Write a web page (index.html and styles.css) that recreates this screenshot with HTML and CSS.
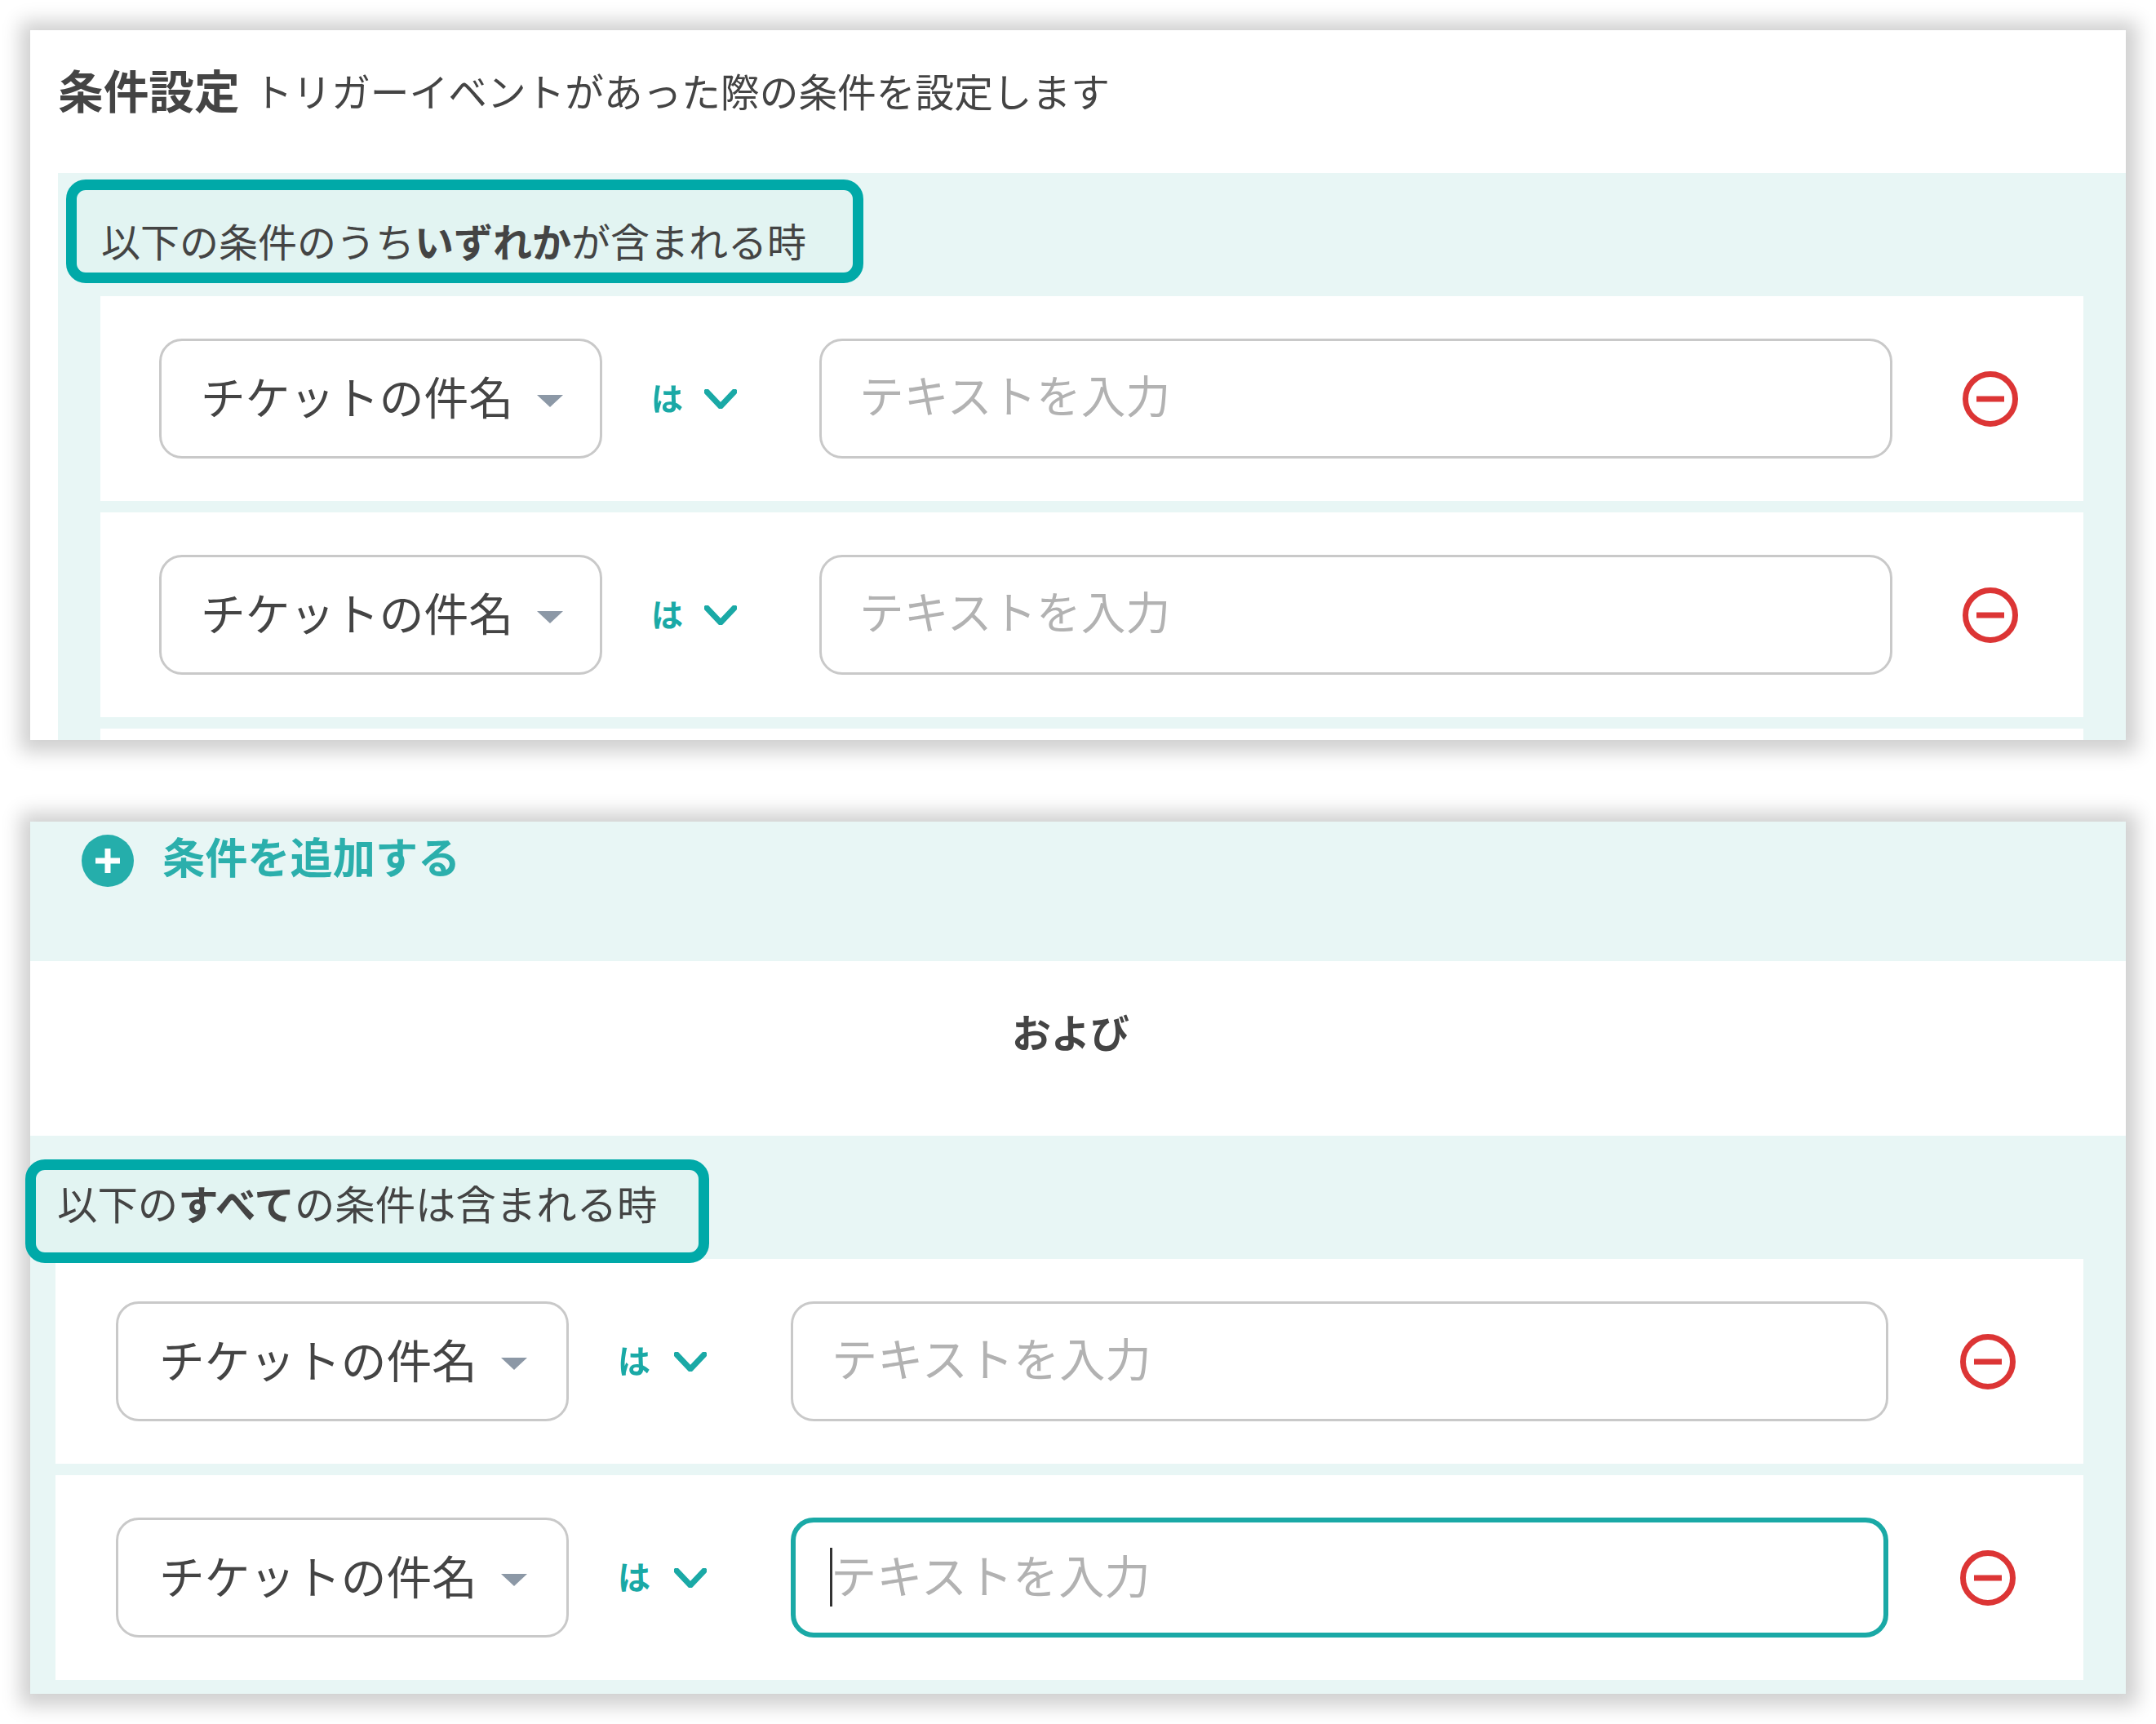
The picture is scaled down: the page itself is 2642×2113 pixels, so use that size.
FILE: index.html
```html
<!DOCTYPE html>
<html lang="ja">
<head>
<meta charset="utf-8">
<title>条件設定</title>
<link rel="stylesheet" href="styles.css">
</head>
<body>
<main class="page">
  <section class="card card-top">
    <header class="card-head">
      <h2 class="title">条件設定</h2>
      <p class="subtitle">トリガーイベントがあった際の条件を設定します</p>
    </header>
    <div class="group group-any">
      <h3 class="group-label">以下の条件のうち<b>いずれか</b>が含まれる時</h3>
      <div class="rows">
        <div class="row">
          <div class="select"><span class="select-text">チケットの件名</span><svg class="caret-down" viewBox="0 0 34 17"><path d="M1 1h32L17 16z"/></svg></div>
          <div class="op"><span class="op-text">は</span><svg class="chevron" viewBox="0 0 40 24"><path d="M3 3l17 18L37 3"/></svg></div>
          <div class="field"><span class="placeholder">テキストを入力</span></div>
          <svg class="remove" viewBox="0 0 68 68"><circle cx="34" cy="34" r="30.5"/><path d="M17 34h34"/></svg>
        </div>
        <div class="row">
          <div class="select"><span class="select-text">チケットの件名</span><svg class="caret-down" viewBox="0 0 34 17"><path d="M1 1h32L17 16z"/></svg></div>
          <div class="op"><span class="op-text">は</span><svg class="chevron" viewBox="0 0 40 24"><path d="M3 3l17 18L37 3"/></svg></div>
          <div class="field"><span class="placeholder">テキストを入力</span></div>
          <svg class="remove" viewBox="0 0 68 68"><circle cx="34" cy="34" r="30.5"/><path d="M17 34h34"/></svg>
        </div>
        <div class="row-stub"></div>
      </div>
    </div>
  </section>

  <section class="card card-bottom">
    <div class="add-bar">
      <svg class="add-icon" viewBox="0 0 64 64"><circle cx="32" cy="32" r="32"/><path d="M32 17v30M17 32h30"/></svg>
      <span class="add-text">条件を追加する</span>
    </div>
    <div class="and-block"><span class="and-text">および</span></div>
    <div class="group group-all">
      <h3 class="group-label">以下の<b>すべて</b>の条件は含まれる時</h3>
      <div class="rows">
        <div class="row">
          <div class="select"><span class="select-text">チケットの件名</span><svg class="caret-down" viewBox="0 0 34 17"><path d="M1 1h32L17 16z"/></svg></div>
          <div class="op"><span class="op-text">は</span><svg class="chevron" viewBox="0 0 40 24"><path d="M3 3l17 18L37 3"/></svg></div>
          <div class="field"><span class="placeholder">テキストを入力</span></div>
          <svg class="remove" viewBox="0 0 68 68"><circle cx="34" cy="34" r="30.5"/><path d="M17 34h34"/></svg>
        </div>
        <div class="row">
          <div class="select"><span class="select-text">チケットの件名</span><svg class="caret-down" viewBox="0 0 34 17"><path d="M1 1h32L17 16z"/></svg></div>
          <div class="op"><span class="op-text">は</span><svg class="chevron" viewBox="0 0 40 24"><path d="M3 3l17 18L37 3"/></svg></div>
          <div class="field field-focus"><i class="text-cursor"></i><span class="placeholder">テキストを入力</span></div>
          <svg class="remove" viewBox="0 0 68 68"><circle cx="34" cy="34" r="30.5"/><path d="M17 34h34"/></svg>
        </div>
      </div>
    </div>
  </section>
</main>
</body>
</html>
```
FILE: styles.css
```css
*,
*::before,
*::after { box-sizing: border-box; }

html, body {
  margin: 0;
  background: #fff;
}

body {
  font-family: "Noto Sans CJK JP", "Noto Sans", sans-serif;
  color: #444;
}

.page {
  width: 2642px;
  min-height: 2113px;
  padding: 37px 37px 0;
  display: flex;
  flex-direction: column;
  gap: 100px;
  filter: blur(0.7px);
}

.card {
  width: 2568px;
  background: #fff;
  box-shadow: 1px 2px 22px 13px rgba(0, 0, 0, 0.19);
}

.card-head {
  height: 175px;
  padding: 42px 0 0 34px;
  display: flex;
  align-items: flex-start;
  gap: 17px;
}

.title {
  margin: 0;
  font-size: 55.7px;
  line-height: 60px;
  font-weight: 700;
}

.subtitle {
  margin: 2px 0 0;
  font-size: 47.7px;
  line-height: 60px;
}

.group {
  background: #e8f6f5;
}

.group-any {
  margin-left: 34px;
  padding-right: 52px;
  --row-left: 52px;
  --label-left: 53px;
  --mark-left: 10px;
  --mark-top: 8px;
  --mark-width: 977px;
  --row-pad: 72px;
  --select-width: 543px;
  --select-font: 54.7px;
  --select-pad: 48px;
  --op-width: 266px;
  --op-pad: 60px;
  --op-font: 39px;
  --op-gap: 26px;
  --field-width: 1315px;
  --field-pad: 46px;
  --field-font: 54.7px;
  --remove-gap: 86px;
}

.group-all {
  padding: 0 52px 17px 0;
  --row-left: 31px;
  --label-left: 33px;
  --mark-left: -6px;
  --mark-top: 29px;
  --mark-width: 838px;
  --row-pad: 74px;
  --select-width: 555px;
  --select-font: 55.7px;
  --select-pad: 50px;
  --op-width: 272px;
  --op-pad: 60px;
  --op-font: 40px;
  --op-gap: 29px;
  --field-width: 1345px;
  --field-pad: 47px;
  --field-font: 56.2px;
  --remove-gap: 88px;
}

.group-label {
  position: relative;
  z-index: 1;
  height: 151px;
  margin: 0;
  padding: 52px 0 0 var(--label-left);
  font-size: 48px;
  line-height: 60px;
  font-weight: 400;
}

.group-all .group-label {
  font-size: 49.4px;
}

.group-label b {
  font-weight: 700;
}

.group-label::before {
  content: "";
  position: absolute;
  z-index: -1;
  left: var(--mark-left);
  top: var(--mark-top);
  width: var(--mark-width);
  height: 127px;
  background: #e2f4f2;
  border: 13px solid #00a9a8;
  border-radius: 24px;
}

.rows {
  margin-left: var(--row-left);
  display: flex;
  flex-direction: column;
  gap: 14px;
}

.row {
  height: 251px;
  padding-left: var(--row-pad);
  background: #fff;
  display: flex;
  align-items: center;
}

.row-stub {
  height: 14px;
  background: #fff;
}

.select,
.field {
  height: 147px;
  background: #fff;
  border: 3px solid #c9c9c9;
  border-radius: 28px;
  display: flex;
  align-items: center;
  flex: none;
}

.select {
  width: var(--select-width);
  padding: 0 0 8px var(--select-pad);
}

.select-text {
  font-size: var(--select-font);
  line-height: 60px;
  white-space: nowrap;
}

.caret-down {
  width: 34px;
  height: 17px;
  margin: 14px 0 0 28px;
  flex: none;
  fill: #8c98a6;
}

.op {
  width: var(--op-width);
  padding-left: var(--op-pad);
  display: flex;
  align-items: center;
  gap: var(--op-gap);
  flex: none;
}

.op-text {
  color: #1aa9a6;
  font-size: var(--op-font);
  font-weight: 700;
  line-height: 60px;
  margin-top: -5px;
}

.chevron {
  width: 40px;
  height: 24px;
  fill: none;
  stroke: #1aa9a6;
  stroke-width: 7px;
  stroke-linecap: round;
  stroke-linejoin: round;
}

.field {
  width: var(--field-width);
  padding: 0 0 11px var(--field-pad);
}

.placeholder {
  color: #b2b2b2;
  font-size: var(--field-font);
  line-height: 60px;
  white-space: nowrap;
}

.field-focus {
  border: 6px solid #1aa9a6;
  padding-left: 42px;
  padding-bottom: 2px;
}

.field-focus .placeholder {
  margin-top: -8px;
  margin-left: -3px;
}

.text-cursor {
  width: 3px;
  height: 72px;
  margin-right: 1px;
  background: #333;
  flex: none;
}

.remove {
  width: 68px;
  height: 68px;
  margin-left: var(--remove-gap);
  flex: none;
  fill: none;
  stroke: #dc3535;
  stroke-width: 7px;
}

.add-bar {
  height: 171px;
  padding: 16px 0 0 63px;
  background: #e8f6f5;
  display: flex;
  align-items: flex-start;
  gap: 35px;
}

.add-icon {
  width: 64px;
  height: 64px;
  flex: none;
  fill: #25aeab;
  stroke: none;
}

.add-icon path {
  fill: none;
  stroke: #fff;
  stroke-width: 7px;
}

.add-text {
  color: #2bafac;
  font-size: 52.2px;
  line-height: 60px;
  font-weight: 700;
  margin-top: -5px;
}

.and-block {
  height: 214px;
  padding: 55px 18px 0 0;
  text-align: center;
}

.and-text {
  display: block;
  font-size: 48px;
  line-height: 60px;
  font-weight: 700;
}
```
